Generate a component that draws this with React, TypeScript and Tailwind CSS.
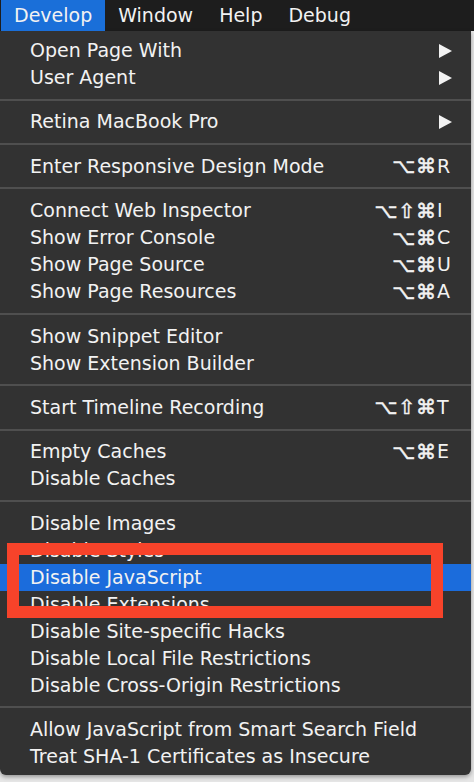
import React from "react";

type Item = {
  label: string;
  mods?: string[];
  keyChar?: string;
  submenu?: boolean;
  selected?: boolean;
};

const GROUPS: Item[][] = [
  [
    { label: "Open Page With", submenu: true },
    { label: "User Agent", submenu: true },
  ],
  [{ label: "Retina MacBook Pro", submenu: true }],
  [{ label: "Enter Responsive Design Mode", mods: ["⌥", "⌘"], keyChar: "R" }],
  [
    { label: "Connect Web Inspector", mods: ["⌥", "⇧", "⌘"], keyChar: "I" },
    { label: "Show Error Console", mods: ["⌥", "⌘"], keyChar: "C" },
    { label: "Show Page Source", mods: ["⌥", "⌘"], keyChar: "U" },
    { label: "Show Page Resources", mods: ["⌥", "⌘"], keyChar: "A" },
  ],
  [{ label: "Show Snippet Editor" }, { label: "Show Extension Builder" }],
  [{ label: "Start Timeline Recording", mods: ["⌥", "⇧", "⌘"], keyChar: "T" }],
  [
    { label: "Empty Caches", mods: ["⌥", "⌘"], keyChar: "E" },
    { label: "Disable Caches" },
  ],
  [
    { label: "Disable Images" },
    { label: "Disable Styles" },
    { label: "Disable JavaScript", selected: true },
    { label: "Disable Extensions" },
    { label: "Disable Site-specific Hacks" },
    { label: "Disable Local File Restrictions" },
    { label: "Disable Cross-Origin Restrictions" },
  ],
  [
    { label: "Allow JavaScript from Smart Search Field" },
    { label: "Treat SHA-1 Certificates as Insecure" },
  ],
];

const MENUBAR = ["Develop", "Window", "Help", "Debug"];

function Row({ item }: { item: Item }) {
  return (
    <div
      className={`flex h-[27px] items-center pl-[30px] pr-[18px] text-[#f2f2f2] ${
        item.selected ? "bg-[#1b6cdc]" : ""
      }`}
    >
      <span className="flex-1 whitespace-nowrap">{item.label}</span>
      {item.submenu && (
        <svg width="13" height="14" viewBox="0 0 13 14" className="mr-[1px]">
          <path d="M0 0 L13 7 L0 14 Z" fill="#f2f2f2" />
        </svg>
      )}
      {item.keyChar && (
        <div className="flex items-center">
          <div className="flex gap-[1px] text-[20px] [-webkit-text-stroke:0.5px_#f2f2f2]">
            {item.mods?.map((m, i) => (
              <span key={i}>{m}</span>
            ))}
          </div>
          <span className="w-[17px] pl-[1px]">{item.keyChar}</span>
        </div>
      )}
    </div>
  );
}

export default function App() {
  return (
    <div className="relative h-[782px] w-[474px] overflow-hidden bg-[#e6e6e6] font-['DejaVu_Sans',sans-serif] text-[19px] leading-none">
      {/* menu bar */}
      <div className="flex h-[31px] items-center bg-[#1d1d1d] pl-[1px] text-[#f2f2f2]">
        {MENUBAR.map((m, i) => (
          <div
            key={m}
            className={`flex h-full items-center px-[13px] ${i === 0 ? "bg-[#1a6fd9]" : ""}`}
          >
            {m}
          </div>
        ))}
      </div>

      {/* dropdown */}
      <div className="w-[471px] rounded-b-[6px] bg-[#323232] pt-[6px] pb-[5px] shadow-[0_2px_4px_rgba(0,0,0,0.35)]">
        {GROUPS.map((group, gi) => (
          <div key={gi}>
            {gi > 0 && (
              <div className="flex h-[17.4px] items-center">
                <div className="h-[2px] w-full bg-[#4f4f4f]" />
              </div>
            )}
            {group.map((item) => (
              <Row key={item.label} item={item} />
            ))}
          </div>
        ))}
      </div>

      {/* annotation */}
      <div className="absolute left-[7px] top-[543px] h-[75px] w-[436px] border-[12px] border-[#f7432a]" />
    </div>
  );
}
